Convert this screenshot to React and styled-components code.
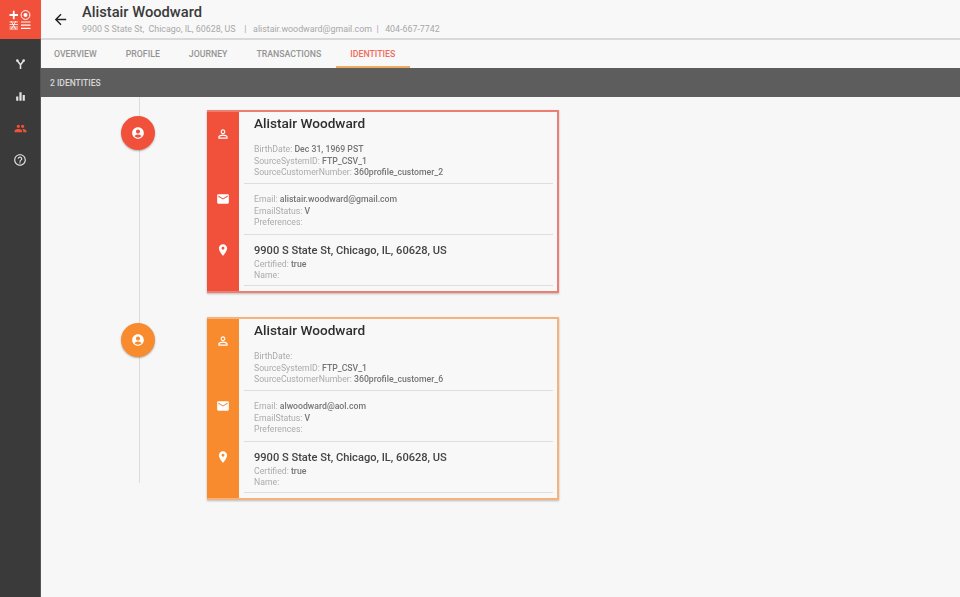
import React from "react";
import styled, { createGlobalStyle } from "styled-components";
import {
  MdAccountCircle,
  MdArrowBack,
  MdEmail,
  MdEqualizer,
  MdHelpOutline,
  MdPeople,
  MdPersonOutline,
  MdPlace,
} from "react-icons/md";

const RED = "#f1503a";
const ORANGE = "#f98b2f";

const GlobalStyle = createGlobalStyle`
  html, body {
    margin: 0;
    height: 100%;
    overflow: hidden;
    background: #f7f7f7;
    font-family: Roboto, "Liberation Sans", sans-serif;
  }
  * { box-sizing: border-box; }
`;

const Page = styled.div`
  display: flex;
  width: 960px;
  height: 597px;
  filter: blur(0.35px);
`;

const Sidebar = styled.nav`
  width: 41px;
  flex: none;
  background: #3a3a3a;
  border-right: 1px solid #555;
  display: flex;
  flex-direction: column;
  align-items: center;
`;

const LogoBox = styled.div`
  width: 41px;
  height: 39px;
  background: ${RED};
  display: flex;
  align-items: center;
  justify-content: center;
`;

const NavList = styled.div`
  display: flex;
  flex-direction: column;
  align-items: center;
  gap: 16px;
  padding-top: 17px;
`;

const NavIcon = styled.div`
  width: 16px;
  height: 16px;
  display: flex;
  align-items: center;
  justify-content: center;
  font-size: ${(props) => props.size || 13}px;
  color: ${(props) => (props.active ? RED : "#e4e4e4")};
`;

const Main = styled.main`
  flex: 1;
  display: flex;
  flex-direction: column;
  min-width: 0;
`;

const Header = styled.header`
  height: 40px;
  display: flex;
  align-items: center;
  padding-left: 11px;
  border-bottom: 2px solid #d9d9d9;
  background: #f8f8f8;
`;

const BackButton = styled.div`
  width: 30px;
  display: flex;
  font-size: 17px;
  color: #222;
`;

const HeaderText = styled.div`
  display: flex;
  flex-direction: column;
  margin-top: -1px;
`;

const Name = styled.div`
  font-size: 14.7px;
  font-weight: 500;
  line-height: 18px;
  color: #3a3a3a;
`;

const SubLine = styled.div`
  font-size: 8.85px;
  line-height: 12px;
  margin-top: 2px;
  color: #a8a8a8;
  white-space: pre;
`;

const Tabs = styled.div`
  height: 28px;
  display: flex;
  background: #f8f8f8;
`;

const Tab = styled.div`
  padding: 1px 15px 0 14px;
  display: flex;
  align-items: center;
  font-size: 8.75px;
  font-weight: 500;
  color: ${(props) => (props.active ? "#f2695a" : "#949494")};
  border-bottom: 2px solid ${(props) => (props.active ? "#eeab62" : "transparent")};

  &:first-child {
    padding-left: 13px;
  }
`;

const CountBar = styled.div`
  height: 29px;
  background: #5d5d5d;
  color: #d8d8d8;
  font-size: 8.5px;
  font-weight: 500;
  display: flex;
  align-items: center;
  padding-left: 9px;
`;

const Timeline = styled.div`
  position: relative;
  flex: 1;
  display: flex;
  flex-direction: column;
  gap: 24px;
  padding: 13px 0 0 166px;

  &::before {
    content: "";
    position: absolute;
    left: 97.5px;
    top: 0;
    height: 386px;
    width: 1.5px;
    background: #dcdcdc;
  }
`;

const Entry = styled.div`
  position: relative;
`;

const Marker = styled.div`
  position: absolute;
  left: -86px;
  top: 6px;
  width: 34px;
  height: 34px;
  border-radius: 50%;
  background: ${(props) => props.color};
  color: #fff;
  font-size: 14px;
  display: flex;
  align-items: center;
  justify-content: center;
  box-shadow: 0 1px 2px rgba(0, 0, 0, 0.3);
`;

const Card = styled.div`
  width: 352px;
  height: 183px;
  display: flex;
  flex-direction: column;
  border: 2px solid ${(props) => props.borderColor};
  border-left: none;
  background: #f8f8f8;
  box-shadow: 0 1px 2px rgba(0, 0, 0, 0.25);
  --band: ${(props) => props.color};
`;

const Section = styled.section`
  display: flex;
  height: ${(props) => props.height}px;
`;

const Band = styled.div`
  width: 32px;
  flex: none;
  background: var(--band);
  color: #fff;
  display: flex;
  justify-content: center;
  padding-top: ${(props) => props.top}px;
  font-size: ${(props) => props.size || 14}px;
`;

const SectionBody = styled.div`
  flex: 1;
  margin: 0 4px 0 5px;
  padding: ${(props) => props.top}px 0 0 10px;
  border-bottom: 1px solid #dedede;
`;

const CardTitle = styled.div`
  font-size: 13.6px;
  font-weight: 500;
  line-height: 16px;
  color: #2e2e2e;
  margin-bottom: 13px;
`;

const Address = styled.div`
  font-size: 11.1px;
  font-weight: 500;
  line-height: 14px;
  color: #444;
  margin-bottom: 1px;
`;

const Field = styled.div`
  font-size: 8.7px;
  line-height: 11.6px;
  color: #ababab;
  white-space: pre;
`;

const Value = styled.span`
  color: #757575;
  font-weight: 500;
`;

const Logo = () => (
  <svg width="22" height="20" viewBox="0 0 22 20" fill="none" stroke="#fff">
    <path d="M0.5 5h8.5M4.75 0.8v8.4" strokeWidth="1.8" />
    <circle cx="16.5" cy="5" r="4.4" strokeWidth="1" />
    <circle cx="16.5" cy="5" r="2" fill="#fff" stroke="none" />
    <path d="M0.5 12h8.5M0.5 14.5h8.5M0.5 17h8.5M0.5 19h8.5M2 11l5 8.5M7 11l-5 8.5" strokeWidth="0.8" />
    <path d="M12 12h9.5M12 15.2h9.5M12 18.4h9.5" strokeWidth="1.2" />
  </svg>
);

const ForkIcon = () => (
  <svg width="9" height="10" viewBox="0 0 9 10" fill="none" stroke="#e4e4e4">
    <path d="M4.5 10V5.8L1.5 2M4.5 5.8L7.5 2" strokeWidth="1.6" />
    <circle cx="1.3" cy="1.6" r="1.3" fill="#e4e4e4" stroke="none" />
    <circle cx="7.7" cy="1.6" r="1.3" fill="#e4e4e4" stroke="none" />
  </svg>
);

const people = [
  {
    color: RED,
    borderColor: "#ec7f72",
    birth: "Dec 31, 1969 PST",
    customer: "360profile_customer_2",
    email: "alistair.woodward@gmail.com",
  },
  {
    color: ORANGE,
    borderColor: "#f5b27c",
    birth: "",
    customer: "360profile_customer_6",
    email: "alwoodward@aol.com",
  },
];

const IdentityCard = ({ person }) => (
  <Entry>
    <Marker color={person.color}>
      <MdAccountCircle />
    </Marker>
    <Card color={person.color} borderColor={person.borderColor}>
      <Section height={73}>
        <Band top={15}>
          <MdPersonOutline />
        </Band>
        <SectionBody top={3}>
          <CardTitle>Alistair Woodward</CardTitle>
          <Field>
            BirthDate: <Value>{person.birth}</Value>
          </Field>
          <Field>
            SourceSystemID: <Value>FTP_CSV_1</Value>
          </Field>
          <Field>
            SourceCustomerNumber: <Value>{person.customer}</Value>
          </Field>
        </SectionBody>
      </Section>
      <Section height={51}>
        <Band top={8}>
          <MdEmail />
        </Band>
        <SectionBody top={10}>
          <Field>
            Email: <Value>{person.email}</Value>
          </Field>
          <Field>
            EmailStatus: <Value>V</Value>
          </Field>
          <Field>Preferences:</Field>
        </SectionBody>
      </Section>
      <Section height={52}>
        <Band top={8}>
          <MdPlace />
        </Band>
        <SectionBody top={9}>
          <Address>9900 S State St, Chicago, IL, 60628, US</Address>
          <Field>
            Certified: <Value>true</Value>
          </Field>
          <Field>Name:</Field>
        </SectionBody>
      </Section>
      <Section height={5}>
        <Band top={0} />
      </Section>
    </Card>
  </Entry>
);

const App = () => (
  <>
    <GlobalStyle />
    <Page>
      <Sidebar>
        <LogoBox>
          <Logo />
        </LogoBox>
        <NavList>
          <NavIcon>
            <ForkIcon />
          </NavIcon>
          <NavIcon>
            <MdEqualizer />
          </NavIcon>
          <NavIcon active>
            <MdPeople />
          </NavIcon>
          <NavIcon size={14}>
            <MdHelpOutline />
          </NavIcon>
        </NavList>
      </Sidebar>
      <Main>
        <Header>
          <BackButton>
            <MdArrowBack />
          </BackButton>
          <HeaderText>
            <Name>Alistair Woodward</Name>
            <SubLine>
              {"9900 S State St,  Chicago, IL, 60628, US    |   alistair.woodward@gmail.com  |   404-667-7742"}
            </SubLine>
          </HeaderText>
        </Header>
        <Tabs>
          <Tab>OVERVIEW</Tab>
          <Tab>PROFILE</Tab>
          <Tab>JOURNEY</Tab>
          <Tab>TRANSACTIONS</Tab>
          <Tab active>IDENTITIES</Tab>
        </Tabs>
        <CountBar>2 IDENTITIES</CountBar>
        <Timeline>
          {people.map((person) => (
            <IdentityCard key={person.email} person={person} />
          ))}
        </Timeline>
      </Main>
    </Page>
  </>
);

export default App;
